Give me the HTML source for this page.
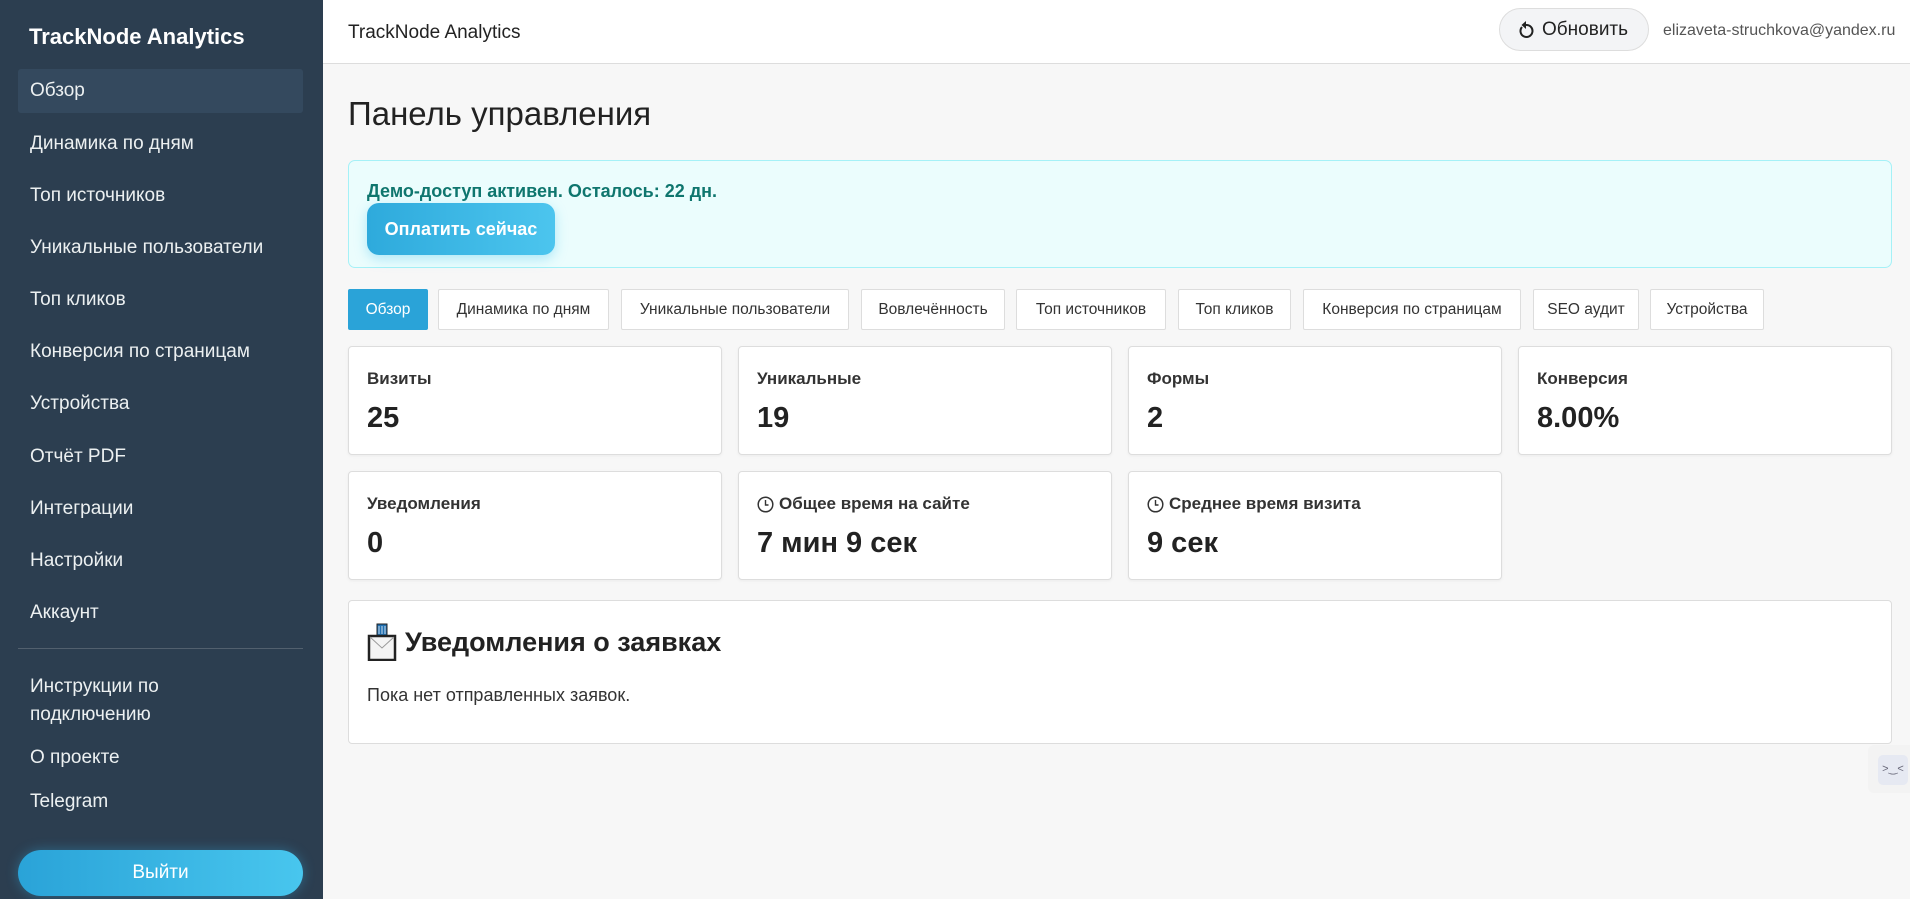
<!DOCTYPE html>
<html><head><meta charset="utf-8"><style>
*{box-sizing:border-box;margin:0;padding:0}
body{width:1910px;height:899px;overflow:hidden;background:#f7f7f7;font-family:"Liberation Sans","DejaVu Sans",sans-serif;color:#222;position:relative}
.sb{position:absolute;left:0;top:0;width:323px;height:899px;background:#2c3e50;color:#ecf0f1}
.sb .t{position:absolute;left:29px;top:24px;font-size:22px;font-weight:bold;color:#fff}
.sb .it{position:absolute;left:30px;font-size:19px;line-height:24px;color:#ecf0f1}
.sb .act{position:absolute;left:18px;top:69px;width:285px;height:44px;background:#34495e;border-radius:3px}
.sb .hr{position:absolute;left:18px;top:648px;width:285px;height:1px;background:#52606e}
.out{position:absolute;left:18px;top:850px;width:285px;height:46px;border-radius:23px;background:linear-gradient(90deg,#2aa3d8,#48c6ee);color:#fff;font-size:19px;text-align:center;line-height:46px;box-shadow:0 0 12px rgba(52,170,220,.4)}
.hd{position:absolute;left:323px;top:0;right:0;height:64px;background:#fff;border-bottom:1px solid #ddd}
.hd .t{position:absolute;left:25px;top:22px;font-size:19px;color:#222}
.rb{position:absolute;left:1176px;top:8px;width:150px;height:43px;border:1px solid #ddd;border-radius:22px;background:#f3f4f6;font-size:19px;line-height:41px;padding-left:42px;color:#222}
.rb svg{position:absolute;left:18px;top:12px}
.em{position:absolute;left:1340px;top:22px;font-size:16px;color:#555}
.h1{position:absolute;left:348px;top:95px;font-size:33px;color:#222}
.demo{position:absolute;left:348px;top:160px;width:1544px;height:108px;background:#ebfdfd;border:1px solid #a5f1f7;border-radius:7px}
.demo .tx{position:absolute;left:18px;top:20px;font-size:18px;font-weight:bold;color:#0f766e}
.demo .pb{position:absolute;left:18px;top:42px;width:188px;height:52px;border-radius:12px;background:linear-gradient(90deg,#2eaadc,#4cc5ee);color:#fff;font-size:18px;font-weight:bold;line-height:52px;text-align:center;box-shadow:0 4px 12px rgba(80,200,240,.4)}
.tab{position:absolute;top:289px;height:41px;border:1px solid #ddd;background:#fff;font-size:15.5px;line-height:39px;text-align:center;color:#333;border-radius:2px}
.tab.a{background:#2aa3d8;border-color:#2aa3d8;color:#fff}
.card{position:absolute;width:374px;height:109px;background:#fff;border:1px solid #ddd;border-radius:4px;box-shadow:0 1px 3px rgba(0,0,0,.05)}
.card .l{position:absolute;left:18px;top:22px;font-size:17px;font-weight:bold;color:#333;display:flex;align-items:center;gap:5px}
.card .v{position:absolute;left:18px;top:55px;font-size:29px;font-weight:bold;color:#222}
.nb{position:absolute;left:348px;top:600px;width:1544px;height:144px;background:#fff;border:1px solid #ddd;border-radius:4px}
.nb .h{position:absolute;left:18px;top:22px;font-size:27px;font-weight:bold;color:#222;display:flex;align-items:center;gap:8px}
.nb .p{position:absolute;left:18px;top:84px;font-size:18px;color:#333}
.wg{position:absolute;left:1868px;top:745px;width:42px;height:48px;background:#f3f3f3;border-radius:6px 0 0 6px}
.wg div{position:absolute;left:10px;top:10px;width:30px;height:30px;border-radius:5px;background:#e6e9f2;font-size:11px;color:#667;text-align:center;line-height:28px}
</style></head><body>
<div class="sb">
<div class="t">TrackNode Analytics</div>
<div class="act"></div>
<div class="it" style="top:79px">Обзор</div>
<div class="it" style="top:132px">Динамика по дням</div>
<div class="it" style="top:184px">Топ источников</div>
<div class="it" style="top:236px">Уникальные пользователи</div>
<div class="it" style="top:288px">Топ кликов</div>
<div class="it" style="top:340px">Конверсия по страницам</div>
<div class="it" style="top:392px">Устройства</div>
<div class="it" style="top:445px">Отчёт PDF</div>
<div class="it" style="top:497px">Интеграции</div>
<div class="it" style="top:549px">Настройки</div>
<div class="it" style="top:601px">Аккаунт</div>
<div class="hr"></div>
<div class="it" style="top:673px;line-height:28px">Инструкции по<br>подключению</div>
<div class="it" style="top:746px">О проекте</div>
<div class="it" style="top:790px">Telegram</div>
<div class="out">Выйти</div>
</div>
<div class="hd">
<div class="t">TrackNode Analytics</div>
<div class="rb"><svg width="16" height="18" viewBox="0 0 16 18"><path d="M4 6 A6 6 0 1 0 8 4" fill="none" stroke="#222" stroke-width="2"/><path d="M8 0 L8 8 L3.5 4 Z" fill="#222"/></svg>Обновить</div>
<div class="em">elizaveta-struchkova@yandex.ru</div>
</div>
<div class="h1">Панель управления</div>
<div class="demo"><div class="tx">Демо-доступ активен. Осталось: 22 дн.</div><div class="pb">Оплатить сейчас</div></div>
<div class="tab a" style="left:348px;width:80px">Обзор</div>
<div class="tab" style="left:438px;width:171px">Динамика по дням</div>
<div class="tab" style="left:621px;width:228px">Уникальные пользователи</div>
<div class="tab" style="left:861px;width:144px">Вовлечённость</div>
<div class="tab" style="left:1016px;width:150px">Топ источников</div>
<div class="tab" style="left:1178px;width:113px">Топ кликов</div>
<div class="tab" style="left:1303px;width:218px">Конверсия по страницам</div>
<div class="tab" style="left:1533px;width:106px">SEO аудит</div>
<div class="tab" style="left:1650px;width:114px">Устройства</div>
<div class="card" style="left:348px;top:346px"><div class="l">Визиты</div><div class="v">25</div></div>
<div class="card" style="left:738px;top:346px"><div class="l">Уникальные</div><div class="v">19</div></div>
<div class="card" style="left:1128px;top:346px"><div class="l">Формы</div><div class="v">2</div></div>
<div class="card" style="left:1518px;top:346px"><div class="l">Конверсия</div><div class="v">8.00%</div></div>
<div class="card" style="left:348px;top:471px"><div class="l">Уведомления</div><div class="v">0</div></div>
<div class="card" style="left:738px;top:471px"><div class="l"><svg width="17" height="17" viewBox="0 0 17 17"><circle cx="8.5" cy="8.5" r="7.3" fill="#fff" stroke="#333" stroke-width="1.5"/><path d="M8.5 4v5h3" fill="none" stroke="#333" stroke-width="1.4"/></svg>Общее время на сайте</div><div class="v">7 мин 9 сек</div></div>
<div class="card" style="left:1128px;top:471px"><div class="l"><svg width="17" height="17" viewBox="0 0 17 17"><circle cx="8.5" cy="8.5" r="7.3" fill="#fff" stroke="#333" stroke-width="1.5"/><path d="M8.5 4v5h3" fill="none" stroke="#333" stroke-width="1.4"/></svg>Среднее время визита</div><div class="v">9 сек</div></div>
<div class="nb"><div class="h"><svg width="30" height="38" viewBox="0 0 30 38"><rect x="10" y="1" width="10" height="12" fill="#1f6fb0" stroke="#222"/><path d="M12 3v8M15 3v8M18 3v8" stroke="#cde" stroke-width="1"/><rect x="2" y="13" width="26" height="24" fill="#f4f4f4" stroke="#222" stroke-width="2.5"/><path d="M3 14 L15 25 L27 14" fill="none" stroke="#999"/></svg>Уведомления о заявках</div><div class="p">Пока нет отправленных заявок.</div></div>
<div class="wg"><div>&gt;‿&lt;</div></div>
</body></html>
